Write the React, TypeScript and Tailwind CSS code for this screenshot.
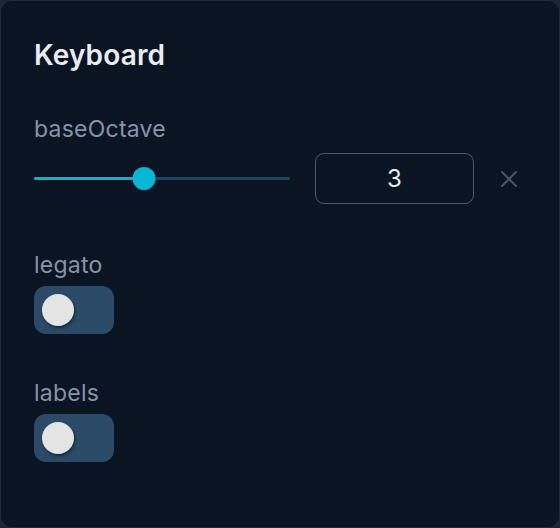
const Toggle = ({ on }: { on: boolean }) => {
  return (
    <button
      className={`flex h-12 w-20 items-center rounded-xl px-2 ${
        on ? "justify-end bg-cyan-600" : "justify-start bg-[#2a4a68]"
      }`}
    >
      <span className="h-8 w-8 rounded-full bg-[#e4e4e4] shadow-[1px_2px_3px_rgba(0,0,0,0.45)]" />
    </button>
  );
};

const App = () => {
  const value = 3;
  const pct = (value / 7) * 100;

  return (
    <div
      className="h-[528px] w-[560px] bg-[#1c2636]"
      style={{ fontFamily: "Inter, 'Noto Sans', sans-serif" }}
    >
      <div className="h-full w-full rounded-xl border border-[#1f2a3b] bg-[#0b1422] px-[33px] pt-[37px]">
        <h1 className="text-[28px] font-semibold leading-[34px] tracking-[0.005em] text-[#e8edf3]">
          Keyboard
        </h1>

        <div className="mt-[43px]">
          <div className="text-[23px] leading-7 tracking-[0.01em] text-[#8595a9]">baseOctave</div>
          <div className="mt-[10px] flex items-center">
            <div className="relative h-[50px] w-[256px]">
              <div className="absolute left-0 right-0 top-[23px] h-[3px] rounded-full bg-[#0d4d64]" />
              <div
                className="absolute left-0 top-[23px] h-[3px] rounded-full bg-[#06b6d4]"
                style={{ width: `${pct}%` }}
              />
              <div
                className="absolute top-[13px] h-[23px] w-[23px] -translate-x-1/2 rounded-full bg-[#06b6d4]"
                style={{ left: `${pct}%` }}
              />
            </div>
            <div className="ml-[25px] flex h-[51px] w-[159px] items-center justify-center rounded-[9px] border-[1.5px] border-[#505864] text-[24px] text-[#e8edf3]">
              {value}
            </div>
            <svg
              className="ml-[26px]"
              width="18"
              height="18"
              viewBox="0 0 18 18"
              fill="none"
              stroke="#4b5563"
              strokeWidth="2"
              strokeLinecap="round"
            >
              <path d="M2 2L16 16M16 2L2 16" />
            </svg>
          </div>
        </div>

        <div className="mt-[47px]">
          <div className="text-[23px] leading-7 tracking-[0.01em] text-[#8595a9]">legato</div>
          <div className="mt-[7px]">
            <Toggle on={false} />
          </div>
        </div>

        <div className="mt-[45px]">
          <div className="text-[23px] leading-7 tracking-[0.01em] text-[#8595a9]">labels</div>
          <div className="mt-[7px]">
            <Toggle on={false} />
          </div>
        </div>
      </div>
    </div>
  );
};

export default App;
